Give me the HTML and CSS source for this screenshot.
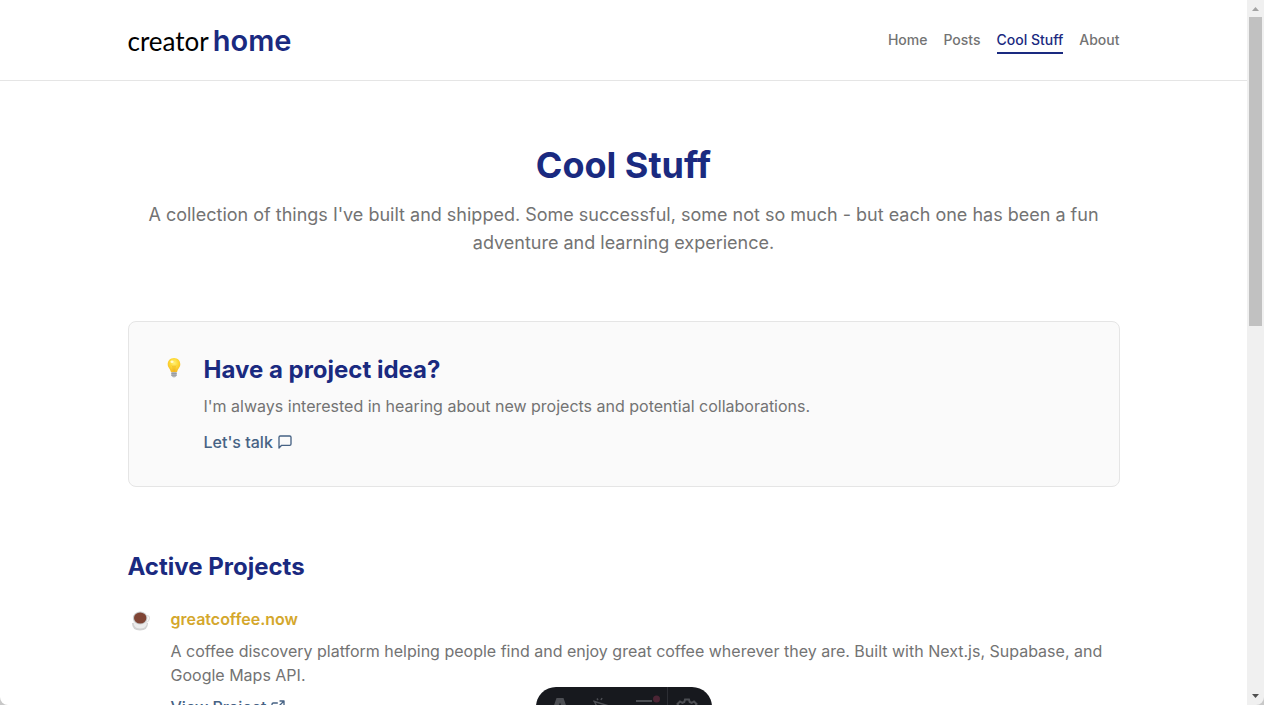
FILE: index.html
```html
<!DOCTYPE html>
<html lang="en">
<head>
<meta charset="utf-8">
<meta name="viewport" content="width=device-width, initial-scale=1">
<title>Cool Stuff - creator home</title>
<link rel="stylesheet" href="styles.css">
</head>
<body>
<div class="window">
  <div class="page">
    <header class="header">
      <div class="container header-row">
        <a class="logo" href="#"><span class="logo-light">creator</span><span class="logo-bold">home</span></a>
        <nav class="nav">
          <a class="nav-link" href="#">Home</a>
          <a class="nav-link" href="#">Posts</a>
          <a class="nav-link active" href="#" aria-current="page">Cool Stuff</a>
          <a class="nav-link" href="#">About</a>
        </nav>
      </div>
    </header>
    <main class="container main">
      <section class="intro">
        <h1 class="title">Cool Stuff</h1>
        <p class="lead">A collection of things I've built and shipped. Some successful, some not so much - but each one has been a fun adventure and learning experience.</p>
      </section>
      <section class="card entry">
        <div class="icon">
          <svg class="icon-bulb" viewBox="0 0 20 20" aria-hidden="true">
            <defs><radialGradient id="glow" cx=".5" cy=".35" r=".6"><stop offset="0" stop-color="#fff176"/><stop offset=".55" stop-color="#fdd835"/><stop offset="1" stop-color="#f6bd27"/></radialGradient></defs>
            <path d="M10 0C6.200 0 3.700 2.800 3.700 6.200c0 3.300 2.700 4.600 3.200 7.800h6.200c.5-3.200 3.200-4.500 3.200-7.800C16.300 2.800 13.800 0 10 0z" fill="url(#glow)"/>
            <path d="M8 7.500l1 1.200 1-1 1 1 1-1.200M9 8.700l.3 5M11 8.700l-.3 5" fill="none" stroke="#eaa91c" stroke-width=".6"/>
            <ellipse cx="8" cy="3.800" rx="1.600" ry="1.200" fill="#fffbd0"/>
            <path d="M7.300 14h5.400v3.500l-1.200 1.500-1.500.6-1.500-.6-1.200-1.500z" fill="#b4b6ba"/>
            <path d="M7.300 15.500h5.400M7.300 17.200h5.400" stroke="#8d8f93" stroke-width=".7"/>
          </svg>
        </div>
        <div class="body">
          <h2 class="heading">Have a project idea?</h2>
          <p class="text">I'm always interested in hearing about new projects and potential collaborations.</p>
          <a class="link talk" href="#">Let's talk
            <svg class="link-icon" viewBox="0 0 24 24" aria-hidden="true"><path d="M21 15a2 2 0 0 1-2 2H7l-4 4V5a2 2 0 0 1 2-2h14a2 2 0 0 1 2 2z"/></svg>
          </a>
        </div>
      </section>
      <section class="projects">
        <h2 class="heading">Active Projects</h2>
        <article class="entry project">
          <div class="icon">
            <svg class="icon-cup" viewBox="0 0 20 20" aria-hidden="true">
              <path d="M1 12q0 7.500 8 7.500t8-7.500z" fill="#d2d2d2"/>
              <path d="M2 8h14.500l-1 6Q14 17.500 9.200 17.500T3 14z" fill="#ececec"/>
              <path d="M16 4.500q2.700.3 2.400 3-.4 3-3.300 4" fill="none" stroke="#e2e2e2" stroke-width="1.200"/>
              <ellipse cx="9.200" cy="7" rx="7.300" ry="6.500" fill="#c9cccd"/>
              <ellipse cx="9.200" cy="7" rx="6.200" ry="5.500" fill="#7f4535"/>
            </svg>
          </div>
          <div class="body">
            <h3 class="project-name">greatcoffee.now</h3>
            <p class="text">A coffee discovery platform helping people find and enjoy great coffee wherever they are. Built with Next.js, Supabase, and Google Maps API.</p>
            <a class="link view" href="#">View Project
              <svg class="link-icon" viewBox="0 0 24 24" aria-hidden="true"><path d="M18 13v6a2 2 0 0 1-2 2H5a2 2 0 0 1-2-2V8a2 2 0 0 1 2-2h6M15 3h6v6M10 14L21 3"/></svg>
            </a>
          </div>
        </article>
      </section>
    </main>
    <div class="toolbar">
      <svg class="toolbar-icons" viewBox="0 0 176 40" aria-hidden="true">
        <path d="M20.500 11h7L33 27h-5l-1-3h-6l-1 3h-5zM24 15.500L22.300 20h3.400z" fill="#4c4e53" fill-rule="evenodd"/>
        <path d="M58.500 14.500L73 19l-6 2.500-2.500 6zM61 11.500l1 1.500M66 11l-1 2M57.500 14l1 .5" fill="none" stroke="#4c4e53" stroke-width="1.500"/>
        <path d="M100 14h16M100 20h16" stroke="#4c4e53" stroke-width="2"/>
        <circle cx="120.500" cy="12" r="3.500" fill="#4c2535"/>
        <path d="M131.500 0v40" stroke="#2c2e34"/>
        <path d="M149 12.500h4l.7 2.500 2 .8 2.300-1.300 2.500 2.500-1.300 2.300.8 2h-18l.8-2-1.300-2.300 2.500-2.500 2.300 1.300 2-.8z" fill="none" stroke="#4c4e53" stroke-width="2"/>
      </svg>
    </div>
  </div>
  <div class="scrollbar" aria-hidden="true">
    <svg class="arrow" viewBox="0 0 17 17"><path d="M5 11h7L8.500 7z" fill="#a3a3a3"/></svg>
    <div class="track"><div class="thumb"></div></div>
    <svg class="arrow" viewBox="0 0 17 17"><path d="M5 6h7L8.500 10z" fill="#505050"/></svg>
  </div>
</div>
</body>
</html>
```
FILE: styles.css
```css
* { box-sizing: border-box; }
body, h1, h2, h3, p { margin: 0; }
body {
  background: #c8c8c8;
  color: #737373;
  font: 16px/24px Inter, "Liberation Sans", sans-serif;
  overflow: hidden;
}
a { color: inherit; text-decoration: none; }
svg { display: block; }
.window { display: flex; height: 100vh; overflow: hidden; }
.page { position: relative; flex: 1; overflow: hidden; background: #fff; border-bottom-left-radius: 8px; }
.container { max-width: 1024px; margin: 0 auto; padding: 0 16px; }
.header { border-bottom: 1px solid #e5e5e5; }
.header-row { display: flex; align-items: center; justify-content: space-between; height: 80px; }
.logo { display: flex; align-items: baseline; gap: 4px; padding-top: 2px; }
.logo-light { font: 400 26px/32px Lato, sans-serif; color: #000; }
.logo-bold { font: 600 29px/32px Inter, sans-serif; color: #1a2a80; }
.nav { display: flex; gap: 16px; font-size: 14px; line-height: 20px; font-weight: 500; }
.nav-link { padding: 4px 0 2px; border-bottom: 2px solid transparent; }
.active { color: #1a2a80; border-color: #1a2a80; }
.main { padding-top: 64px; }
.intro { text-align: center; }
.title { margin-bottom: 16px; font-size: 36px; line-height: 40px; font-weight: 700; color: #1a2a80; }
.lead { font-size: 18px; line-height: 28px; }
.card { margin: 64px 0; padding: 32px; border: 1px solid #e5e5e5; border-radius: 8px; background: #fafafa; }
.entry { display: flex; gap: 16px; }
.icon { flex: 0 0 27px; display: flex; justify-content: center; align-items: flex-start; padding-top: 4px; }
.icon svg { width: 20px; height: 20px; }
.body { flex: 1; }
.heading { font-size: 24px; line-height: 32px; font-weight: 700; color: #1a2a80; }
.body .heading { margin-bottom: 8px; }
.link { display: flex; align-items: center; gap: 4px; width: max-content; font-weight: 500; color: #466284; }
.talk { margin-top: 12px; }
.view { margin-top: 8px; }
.link-icon { width: 16px; height: 16px; fill: none; stroke: currentColor; stroke-width: 2; stroke-linecap: round; stroke-linejoin: round; }
.project { margin-top: 24px; }
.project-name { margin-bottom: 8px; font-size: 16px; line-height: 24px; font-weight: 600; color: #d4a72c; }
.toolbar { position: absolute; left: 50%; bottom: -22px; width: 176px; height: 40px; margin-left: -88px; border-radius: 20px; background: #17191e; overflow: hidden; }
.scrollbar { display: flex; flex-direction: column; width: 17px; background: #f0f0f0; border-bottom-right-radius: 8px; }
.arrow { width: 17px; height: 17px; }
.track { flex: 1; }
.thumb { height: 46%; margin: 0 2px; background: #c1c1c1; }
```
